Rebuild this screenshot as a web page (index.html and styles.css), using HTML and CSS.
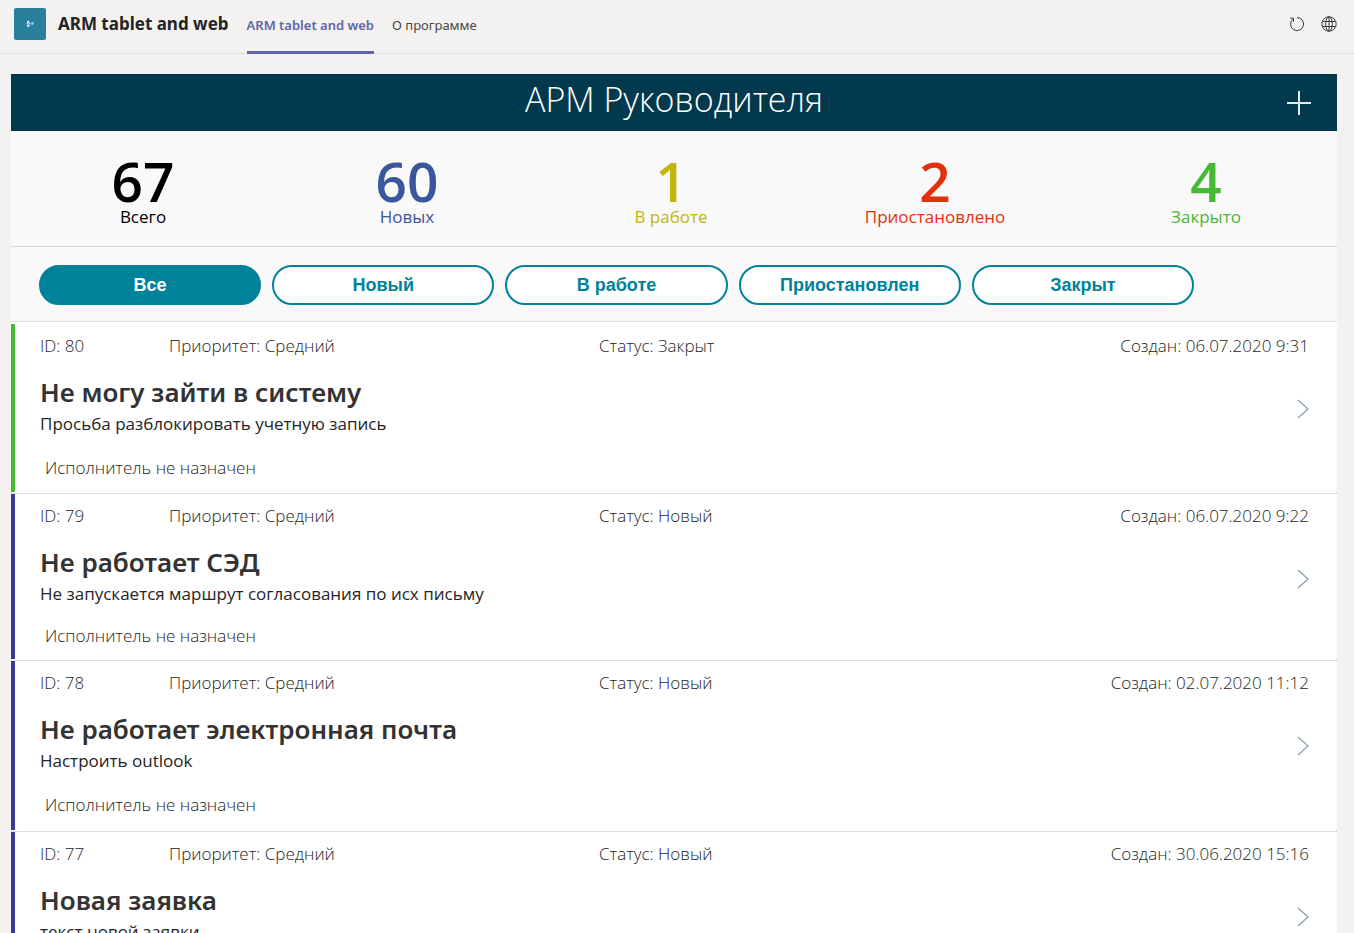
FILE: index.html
```html
<!DOCTYPE html>
<html lang="ru">
<head>
<meta charset="utf-8">
<meta name="viewport" content="width=device-width, initial-scale=1">
<title>ARM tablet and web</title>
<link rel="stylesheet" href="styles.css">
</head>
<body>
<header class="topbar">
  <svg class="app-logo" viewBox="0 0 32 32" aria-hidden="true">
    <rect width="32" height="32" rx="2" fill="#29809b"/>
    <g fill="#e4f3f6"><circle cx="14.300" cy="14" r="1.200"/><circle cx="13.300" cy="15.800" r=".8"/><circle cx="15.500" cy="15.800" r=".8"/><circle cx="14.300" cy="17.700" r="1.200"/></g>
    <path d="M17 14.200h3v1.500l-1 .3v1h-1.500z" fill="#a5cbd6"/>
  </svg>
  <h1 class="app-name">ARM tablet and web</h1>
  <nav class="tabs">
    <a class="tab tab-active" href="#">ARM tablet and web</a>
    <a class="tab" href="#">О программе</a>
  </nav>
  <div class="tools">
    <button class="icon-btn" type="button" aria-label="Обновить">
      <svg width="16" height="16" viewBox="0 0 16 16" fill="none" stroke="#3b3a39"><path d="M8 1.600a6.500 6.500 0 1 1-4.500 1.900M1 2.200h3.500v3.500" /></svg>
    </button>
    <button class="icon-btn" type="button" aria-label="Открыть в браузере">
      <svg width="16" height="16" viewBox="0 0 16 16" fill="none" stroke="#3b3a39"><circle cx="8" cy="8" r="7.200"/><ellipse cx="8" cy="8" rx="3.300" ry="7.200"/><path d="M8 1v14M1.500 5.500h13M1.500 10.500h13"/></svg>
    </button>
  </div>
</header>
<main class="panel">
  <div class="titlebar">
    <h2 class="title">АРМ Руководителя</h2>
    <button class="add-btn" type="button" aria-label="Добавить">
      <svg width="24" height="24" viewBox="0 0 24 24" stroke="#e6ecee" stroke-width="2"><path d="M12 0v24M0 12h24"/></svg>
    </button>
  </div>
  <section class="stats">
    <div class="stat stat-all"><span class="num">67</span><span class="label">Всего</span></div>
    <div class="stat stat-new"><span class="num">60</span><span class="label">Новых</span></div>
    <div class="stat stat-work"><span class="num">1</span><span class="label">В работе</span></div>
    <div class="stat stat-paused"><span class="num">2</span><span class="label">Приостановлено</span></div>
    <div class="stat stat-closed"><span class="num">4</span><span class="label">Закрыто</span></div>
  </section>
  <div class="filters">
    <button class="filter filter-active" type="button">Все</button>
    <button class="filter" type="button">Новый</button>
    <button class="filter" type="button">В работе</button>
    <button class="filter" type="button">Приостановлен</button>
    <button class="filter" type="button">Закрыт</button>
  </div>
  <section class="list">
    <article class="ticket closed">
      <div class="meta"><span>ID: 80</span><span>Приоритет: Средний</span><span>Статус: Закрыт</span><span class="created">Создан: 06.07.2020 9:31</span></div>
      <h3 class="subject">Не могу зайти в систему</h3>
      <p class="text">Просьба разблокировать учетную запись</p>
      <p class="assignee">Исполнитель не назначен</p>
      <button class="open-btn" type="button" aria-label="Открыть заявку 80"><svg width="12" height="20" viewBox="0 0 12 20" fill="none" stroke="#8aa3b0" stroke-width="1.300"><path d="M1 1l10 9-10 9"/></svg></button>
    </article>
    <article class="ticket compact">
      <div class="meta"><span>ID: 79</span><span>Приоритет: Средний</span><span>Статус: Новый</span><span class="created">Создан: 06.07.2020 9:22</span></div>
      <h3 class="subject">Не работает СЭД</h3>
      <p class="text">Не запускается маршрут согласования по исх письму</p>
      <p class="assignee">Исполнитель не назначен</p>
      <button class="open-btn" type="button" aria-label="Открыть заявку 79"><svg width="12" height="20" viewBox="0 0 12 20" fill="none" stroke="#8aa3b0" stroke-width="1.300"><path d="M1 1l10 9-10 9"/></svg></button>
    </article>
    <article class="ticket">
      <div class="meta"><span>ID: 78</span><span>Приоритет: Средний</span><span>Статус: Новый</span><span class="created">Создан: 02.07.2020 11:12</span></div>
      <h3 class="subject">Не работает электронная почта</h3>
      <p class="text">Настроить outlook</p>
      <p class="assignee">Исполнитель не назначен</p>
      <button class="open-btn" type="button" aria-label="Открыть заявку 78"><svg width="12" height="20" viewBox="0 0 12 20" fill="none" stroke="#8aa3b0" stroke-width="1.300"><path d="M1 1l10 9-10 9"/></svg></button>
    </article>
    <article class="ticket">
      <div class="meta"><span>ID: 77</span><span>Приоритет: Средний</span><span>Статус: Новый</span><span class="created">Создан: 30.06.2020 15:16</span></div>
      <h3 class="subject">Новая заявка</h3>
      <p class="text">текст новой заявки</p>
      <p class="assignee">Исполнитель не назначен</p>
      <button class="open-btn" type="button" aria-label="Открыть заявку 77"><svg width="12" height="20" viewBox="0 0 12 20" fill="none" stroke="#8aa3b0" stroke-width="1.300"><path d="M1 1l10 9-10 9"/></svg></button>
    </article>
  </section>
</main>
</body>
</html>
```
FILE: styles.css
```css
* { box-sizing: border-box; }
body {
  margin: 0;
  height: 100vh;
  overflow: hidden;
  background: #f3f2f0;
  font-family: "Open Sans", "Noto Sans", sans-serif;
  color: #252424;
}
h1, h2, h3, p { margin: 0; }
button { font: inherit; padding: 0; border: 0; background: none; cursor: pointer; }

.topbar {
  display: flex;
  align-items: flex-start;
  height: 54px;
  padding: 0 17px 0 14px;
  border-bottom: 1px solid #e3e2e0;
}
.app-logo { width: 32px; height: 32px; margin-top: 8px; }
.app-name { margin: 12px 18px 0 12px; font: 700 17px/24px "Noto Sans", sans-serif; }
.tabs { display: flex; gap: 18px; }
.tab {
  height: 54px;
  padding-top: 15px;
  font: 400 13px/20px "Noto Sans", sans-serif;
  color: #484644;
  text-decoration: none;
}
.tab-active { color: #6264a7; font-weight: 600; border-bottom: 3px solid #6264a7; }
.tools { display: flex; gap: 16px; margin: 16px 0 0 auto; }
.icon-btn { width: 16px; height: 16px; }
.icon-btn svg, .add-btn svg, .open-btn svg { display: block; }

.panel { margin: 20px 17px 0 11px; background: #fff; }
.titlebar {
  display: grid;
  grid-template-columns: 1fr auto 1fr;
  align-items: center;
  height: 57px;
  padding: 0 26px 0 0;
  background: #02394d;
}
.title { grid-column: 2; margin: 0 0 8px 26px; font-size: 34px; line-height: 48px; font-weight: 300; color: #fff; }
.add-btn { justify-self: end; }

.stats {
  display: grid;
  grid-template-columns: 1fr 1fr 1fr 1fr 270px;
  height: 116px;
  padding-top: 25px;
  background: #f9f9f9;
  border-bottom: 1px solid #d5d7d8;
}
.stat { display: flex; flex-direction: column; align-items: center; }
.stat-closed { padding-left: 8px; }
.num { font-size: 55px; line-height: 50px; font-weight: 600; }
.label { font-size: 17px; line-height: 22px; }
.stat-all { color: #000; }
.stat-new { color: #3a569c; }
.stat-work { color: #c3b50b; }
.stat-paused { color: #e5300f; }
.stat-closed { color: #47b933; }

.filters {
  display: flex;
  gap: 11px;
  height: 75px;
  padding: 18px 143px 0 28px;
  background: #f9f9f9;
  border-bottom: 1px solid #dcdddd;
}
.filter {
  flex: 1;
  height: 40px;
  border: 2px solid #008299;
  border-radius: 20px;
  background: #fff;
  color: #008299;
  font: 700 18px/20px "Liberation Sans", Arial, sans-serif;
}
.filter-active { background: #008299; color: #fff; }

.list { padding-top: 2px; }
.ticket {
  display: grid;
  grid-template-columns: 1fr auto;
  grid-template-rows: 42px 42px 24px auto;
  height: 169px;
  margin-bottom: 2px;
  padding: 0 28px 0 25px;
  border-left: 4px solid #3b3a98;
  box-shadow: 0 2px 0 -1px #fff, 0 2px 0 0 #dcdddd;
}
.closed { height: 168px; border-left-color: #47b933; }
.compact { height: 165px; }
.meta {
  grid-column: 1 / -1;
  display: grid;
  grid-template-columns: 129px 430px 1fr auto;
  padding-top: 10px;
  font-size: 17px;
  line-height: 24px;
  font-weight: 300;
}
.subject { grid-area: 2 / 1; padding-top: 8px; font: 600 26px/36px "Noto Sans", sans-serif; color: #333; }
.text { grid-area: 3 / 1; padding-top: 4px; font-size: 17px; line-height: 24px; }
.assignee { grid-area: 4 / 1; margin-top: 20px; padding: 4px 0 0 5px; font-size: 17px; line-height: 24px; font-weight: 300; }
.compact .assignee { margin-top: 18px; }
.open-btn { grid-area: 2 / 2 / 4 / 3; align-self: center; margin-top: 20px; }
```
